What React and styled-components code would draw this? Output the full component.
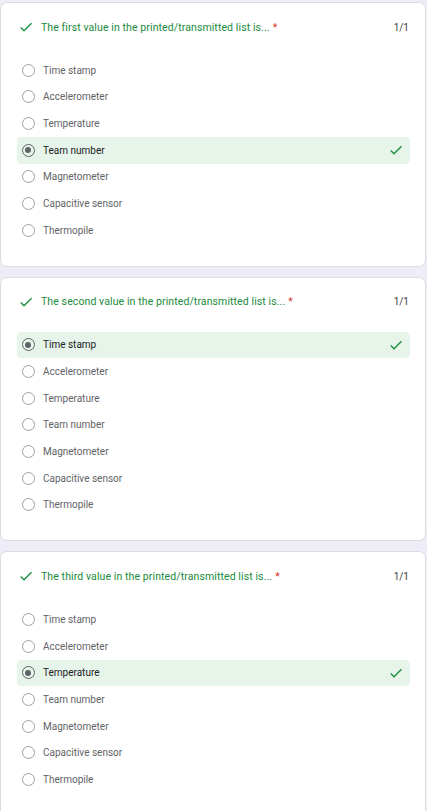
import React from "react";
import styled, { createGlobalStyle } from "styled-components";

const OPTIONS = [
  "Time stamp",
  "Accelerometer",
  "Temperature",
  "Team number",
  "Magnetometer",
  "Capacitive sensor",
  "Thermopile",
];

const QUESTIONS = [
  { title: "The first value in the printed/transmitted list is...", answer: "Team number" },
  { title: "The second value in the printed/transmitted list is...", answer: "Time stamp" },
  { title: "The third value in the printed/transmitted list is...", answer: "Temperature" },
];

const GlobalStyle = createGlobalStyle`
  body {
    margin: 0;
    background: #efebf7;
    font-family: Roboto, "Liberation Sans", Arial, sans-serif;
  }
`;

const Page = styled.div`
  display: flex;
  flex-direction: column;
  gap: 10px;
  padding: 2px 1px 0 0;
`;

const Card = styled.div`
  background: #fff;
  border: 1px solid #dadce0;
  border-radius: 7px;
  padding: 16px 15px 22px 16px;
`;

const TitleRow = styled.div`
  display: flex;
  align-items: center;
  height: 16px;
  margin-bottom: 22px;
`;

const TitleCheck = styled.svg`
  width: 16px;
  height: 16px;
  margin-left: 1px;
  margin-right: 7px;
  fill: #1e8e3e;
  flex: none;
`;

const Title = styled.div`
  flex: 1;
  font-size: 10.5px;
  color: #1a8a3d;
  letter-spacing: 0.1px;
`;

const Star = styled.span`
  color: #d93025;
  margin-left: 3px;
`;

const Score = styled.div`
  font-size: 10px;
  color: #3c4043;
  margin-right: 1px;
`;

const Option = styled.div`
  display: flex;
  align-items: center;
  height: 26.67px;
  border-radius: 4px;
  padding: 0 6px 0 4.5px;
  background: ${(p) => (p.$correct ? "#e6f4ea" : "transparent")};
`;

const Radio = styled.span`
  width: 13px;
  height: 13px;
  box-sizing: border-box;
  border-radius: 50%;
  border: 1.3px solid ${(p) => (p.$checked ? "#5f6368" : "#9aa0a6")};
  display: flex;
  align-items: center;
  justify-content: center;
  flex: none;

  &::after {
    content: "";
    width: 6px;
    height: 6px;
    border-radius: 50%;
    background: #5f6368;
    display: ${(p) => (p.$checked ? "block" : "none")};
  }
`;

const Label = styled.span`
  flex: 1;
  margin-left: 8.5px;
  font-size: 10px;
  color: ${(p) => (p.$checked ? "#202124" : "#5f6368")};
`;

const RowCheck = styled.svg`
  width: 16px;
  height: 16px;
  fill: #1e8e3e;
`;

const DONE = "M9 16.17L4.83 12l-1.42 1.41L9 19 21 7l-1.41-1.41z";

const App = () => (
  <>
    <GlobalStyle />
    <Page>
      {QUESTIONS.map((q) => (
        <Card key={q.title}>
          <TitleRow>
            <TitleCheck viewBox="0 0 24 24">
              <path d={DONE} />
            </TitleCheck>
            <Title>
              {q.title}
              <Star>*</Star>
            </Title>
            <Score>1/1</Score>
          </TitleRow>
          {OPTIONS.map((o) => {
            const hit = o === q.answer;
            return (
              <Option key={o} $correct={hit}>
                <Radio $checked={hit} />
                <Label $checked={hit}>{o}</Label>
                {hit && (
                  <RowCheck viewBox="0 0 24 24">
                    <path d={DONE} />
                  </RowCheck>
                )}
              </Option>
            );
          })}
        </Card>
      ))}
    </Page>
  </>
);

export default App;
